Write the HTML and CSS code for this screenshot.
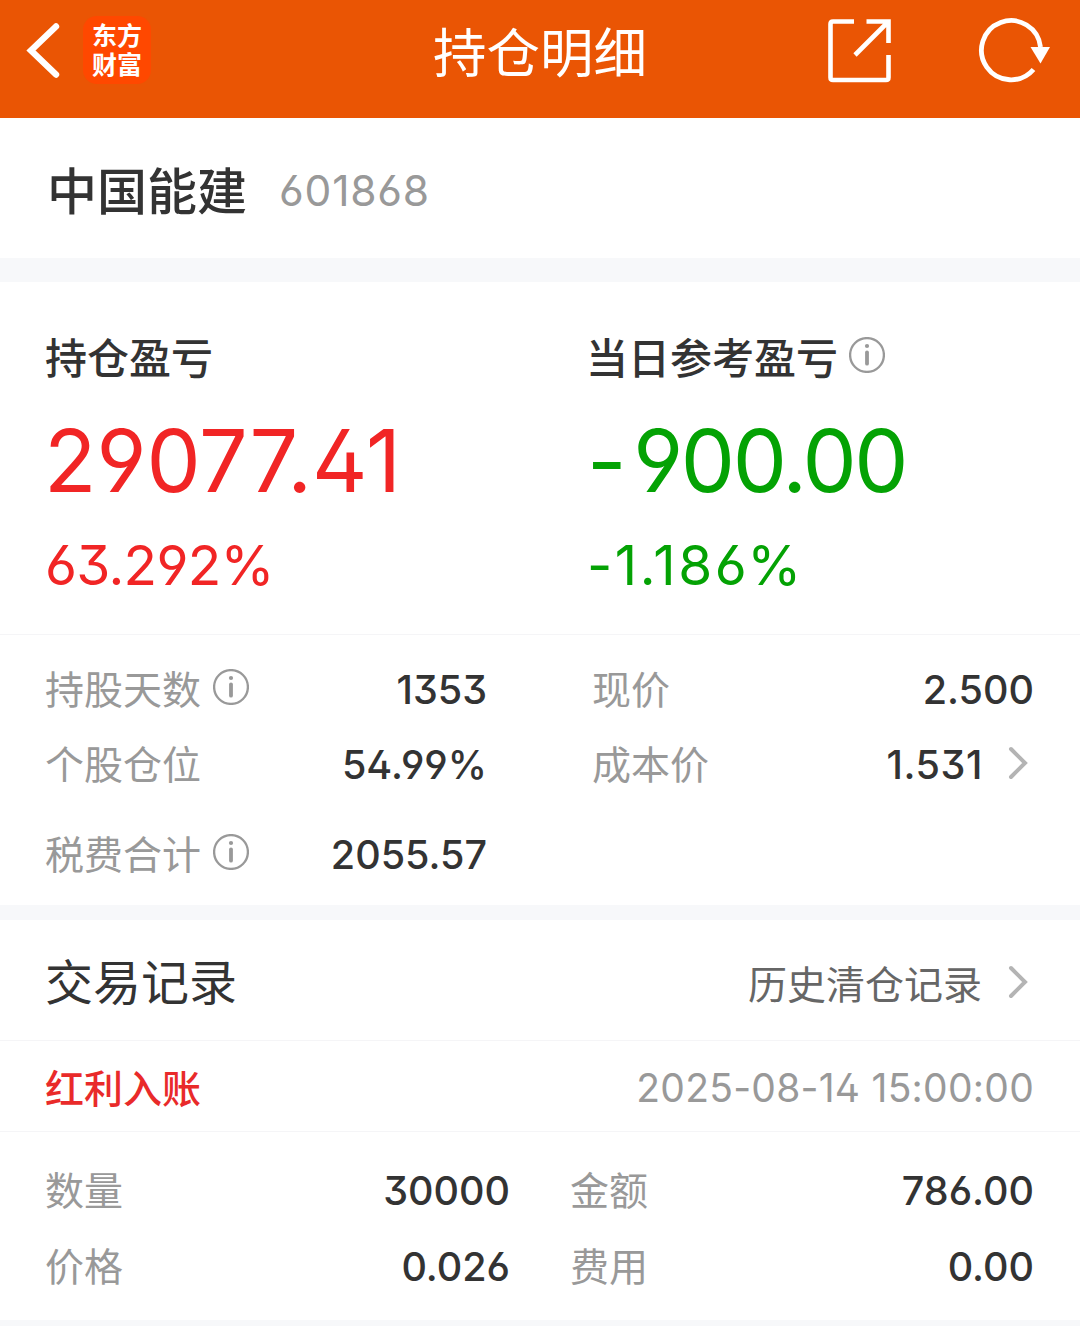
FILE: index.html
```html
<!DOCTYPE html>
<html lang="zh-CN">
<head>
<meta charset="utf-8">
<title>持仓明细</title>
<link rel="stylesheet" href="styles.css">
</head>
<body>
<svg class="defs" width="0" height="0" aria-hidden="true">
  <symbol id="info" viewBox="0 0 36 36">
    <circle cx="18" cy="18" r="16.9" fill="none" stroke="#999" stroke-width="2.3"/>
    <circle cx="18" cy="9" r="2.1" fill="#999"/>
    <path d="M18 15.300v11.400" stroke="#999" stroke-width="3.800" stroke-linecap="round"/>
  </symbol>
  <symbol id="chevron" viewBox="0 0 20 34">
    <path d="M3 3 17 17 3 31" fill="none" stroke="#b4b4b4" stroke-width="4" stroke-linecap="round" stroke-linejoin="miter"/>
  </symbol>
</svg>

<header class="navbar">
  <div class="nav-left">
    <svg class="back" width="36" height="60" viewBox="0 0 36 60"><path d="M31 6.500 6 30.500 31 54.500" fill="none" stroke="#fff" stroke-width="6.400" stroke-linecap="round"/></svg>
    <div class="logo">东方<br>财富</div>
  </div>
  <h1 class="nav-title">持仓明细</h1>
  <div class="nav-right">
    <svg class="share" width="64" height="64" viewBox="0 0 64 64" fill="none" stroke="#fff" stroke-width="4.600">
      <path d="M26 2.500H5Q2.500 2.500 2.500 5V58.500Q2.500 61 5 61H58Q60.500 61 60.500 58.500V36M38.500 2.500H60.500V24M60 3 27 36"/>
    </svg>
    <svg class="refresh" width="74" height="66" viewBox="0 0 74 66">
      <path d="M62.500 30A29.600 29.600 0 1 0 55.500 52.500" fill="none" stroke="#fff" stroke-width="4.800"/>
      <path d="M52.500 30H72L62.500 46.500Z" fill="#fff"/>
    </svg>
  </div>
</header>

<main>
  <section class="stock">
    <h2 class="stock-name">中国能建</h2>
    <span class="stock-code num">601868</span>
  </section>

  <section class="summary">
    <div class="pnl up">
      <h3 class="pnl-title">持仓盈亏</h3>
      <div class="pnl-amount num">29077.41</div>
      <div class="pnl-rate num">63.292%</div>
    </div>
    <div class="pnl down">
      <h3 class="pnl-title">当日参考盈亏<svg class="info"><use href="#info"/></svg></h3>
      <div class="pnl-amount num"><span class="sign">-</span>900.00</div>
      <div class="pnl-rate num">-1.186%</div>
    </div>
  </section>

  <section class="metrics">
    <div class="row"><span class="label">持股天数<svg class="info"><use href="#info"/></svg></span><span class="value num">1353</span></div>
    <div class="row"><span class="label">现价</span><span class="value num">2.500</span></div>
    <div class="row"><span class="label">个股仓位</span><span class="value num">54.99%</span></div>
    <div class="row linked"><span class="label">成本价</span><span class="value num">1.531</span><svg class="chevron"><use href="#chevron"/></svg></div>
    <div class="row"><span class="label">税费合计<svg class="info"><use href="#info"/></svg></span><span class="value num">2055.57</span></div>
  </section>

  <section class="records">
    <div class="records-head">
      <h2 class="records-title">交易记录</h2>
      <a class="history">历史清仓记录<svg class="chevron"><use href="#chevron"/></svg></a>
    </div>
    <div class="record-head">
      <span class="record-type">红利入账</span>
      <time class="record-time num">2025-08-14 15:00:00</time>
    </div>
    <div class="record-body">
      <div class="row"><span class="label">数量</span><span class="value num">30000</span></div>
      <div class="row"><span class="label">金额</span><span class="value num">786.00</span></div>
      <div class="row"><span class="label">价格</span><span class="value num">0.026</span></div>
      <div class="row"><span class="label">费用</span><span class="value num">0.00</span></div>
    </div>
  </section>
</main>
</body>
</html>
```
FILE: styles.css
```css
* { box-sizing: border-box; margin: 0; padding: 0; }

body {
  background: #fff;
  color: #333;
  font-family: "Noto Sans CJK SC", sans-serif;
}

h1, h2, h3 { font-weight: 400; }
svg { display: block; flex: none; }
.defs { position: absolute; }

.num {
  font-family: Inter, "Noto Sans CJK SC", sans-serif;
  font-feature-settings: "ss01";
  white-space: nowrap;
}

/* Top bar */
.navbar {
  display: grid;
  grid-template-columns: 1fr auto 1fr;
  height: 118px;
  background: #ea5504;
  color: #fff;
}
.nav-left { display: flex; align-items: flex-start; padding: 16px 0 0 25px; }
.back { margin-top: 4px; }
.logo {
  width: 68px;
  height: 68px;
  margin-left: 22px;
  padding-top: 4px;
  border-radius: 14px;
  background: #ff4800;
  font-size: 25px;
  font-weight: 700;
  line-height: 29px;
  text-align: center;
}
.nav-title { font-size: 53.5px; line-height: 99px; }
.nav-right { display: flex; justify-content: flex-end; gap: 86px; padding: 17px 28px 0 0; }
.share { margin-top: 2px; }

/* Stock name */
.stock {
  display: flex;
  align-items: flex-start;
  height: 140px;
  padding: 0 47px;
  line-height: 141px;
}
.stock-name { font-size: 50px; font-weight: 500; }
.stock-code { padding-top: 2px; margin-left: 32px; font-size: 42.5px; letter-spacing: 0.8px; color: #999; }

/* Profit and loss */
.summary {
  display: grid;
  grid-template-columns: 541px 1fr;
  height: 377px;
  padding: 46px 0 0 45px;
  border-top: 24px solid #f7f8fa;
  border-bottom: 1px solid #f5f5f7;
}
.pnl-title {
  display: flex;
  align-items: center;
  font-size: 42px;
  font-weight: 500;
  line-height: 56px;
}
.pnl-title .info { margin: -2px 0 0 11px; }
.pnl-amount { margin-top: 22px; font-size: 86px; line-height: 110px; }
.pnl-rate { margin-top: 14px; font-size: 55px; line-height: 70px; }
.up .num { color: #f12525; }
.up .pnl-amount { margin-left: -1px; }
.up .pnl-rate { letter-spacing: -0.7px; }
.down .num { color: #04a204; }
.down .pnl-amount { padding-left: 1px; letter-spacing: -2.4px; }
.down .pnl-rate { padding-left: 1px; letter-spacing: 2.5px; }
.sign { margin-right: 9px; }

.info { width: 36px; height: 36px; }
.chevron { width: 20px; height: 34px; }

/* Label and value rows */
.row {
  display: flex;
  align-items: baseline;
  justify-content: space-between;
  font-size: 39px;
  line-height: 58px;
}
.label { display: flex; align-items: center; color: #999; }
.label .info { margin: -1px 0 0 12px; }
.value { font-size: 39.5px; font-weight: 500; }

.metrics {
  display: grid;
  grid-template-columns: 442px 442px;
  grid-template-rows: 75px 90px 58px;
  column-gap: 105px;
  height: 270px;
  padding: 23px 45px 0 45px;
}
.linked .value { margin-left: auto; letter-spacing: 0.6px; }
.linked .chevron { align-self: flex-start; margin: 13px 6px 0 25px; }

/* Trade records */
.records { border-top: 15px solid #f7f8fa; border-bottom: 6px solid #f7f8fa; }
.records-head,
.record-head {
  display: flex;
  align-items: center;
  justify-content: space-between;
  padding: 0 46px 0 45px;
  border-bottom: 1px solid #f5f5f7;
}
.records-head { height: 121px; }
.records-title { padding-bottom: 2px; font-size: 48px; }
.history {
  display: flex;
  align-items: center;
  gap: 26px;
  padding: 4px 6px 0 0;
  font-size: 39px;
  color: #666;
}
.record-head { height: 91px; font-size: 39px; }
.record-type { color: #e92a2a; font-weight: 500; }
.record-time { padding-top: 3px; letter-spacing: 0.25px; color: #999; }
.record-body {
  display: grid;
  grid-template-columns: 465px 464px;
  grid-template-rows: 76px 58px;
  column-gap: 60px;
  height: 188px;
  padding: 27px 46px 0 45px;
}
```
